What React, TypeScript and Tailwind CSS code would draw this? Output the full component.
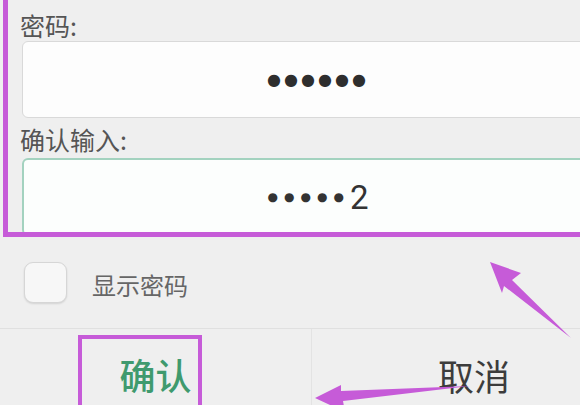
import React from "react";

const cjk = { fontFamily: '"Noto Sans CJK SC", "Noto Sans", sans-serif' };

export default function App() {
  return (
    <div className="relative w-[580px] h-[405px] overflow-hidden bg-[#efefef]" style={cjk}>
      <div className="w-[636px] flex flex-col">
        <div className="px-[22px] pt-[11px] flex flex-col">
          <div className="ml-[-2px] h-[28px] text-[25px] leading-[28px] text-[#555]">密码:</div>
          <div className="mt-[2px] h-[77px] rounded-[6px] bg-[#fdfdfd] border border-[#d9d9d9] flex items-center justify-center">
            <span className="text-[16px] leading-none tracking-[3px] text-[#2e2e2e]" style={{ fontFamily: '"DejaVu Sans", sans-serif' }}>●●●●●●</span>
          </div>
          <div className="ml-[-2px] mt-[7px] h-[28px] text-[25px] leading-[28px] text-[#555]">确认输入:</div>
          <div className="mt-[5px] h-[78px] rounded-[6px] bg-[#fcfefd] border-2 border-[#a3d2bf] flex items-center justify-center">
            <span className="flex items-center text-[#333]">
              <span className="text-[12px] leading-none tracking-[6px]" style={{ fontFamily: '"DejaVu Sans", sans-serif' }}>●●●●●</span>
              <span className="text-[33px] leading-none" style={{ fontFamily: 'Roboto, sans-serif' }}>2</span>
            </span>
          </div>
          <div className="mt-[26px] h-[41px] flex items-center">
            <div className="ml-[2px] w-[43px] h-[41px] rounded-[9px] bg-[#f7f7f7] border border-[#d6d6d6] shadow-[0_1px_2px_rgba(0,0,0,0.12)]" />
            <span className="ml-[25px] mt-[4px] text-[24px] leading-[28px] text-[#666]">显示密码</span>
          </div>
        </div>
        <div className="mt-[25px] border-t border-[#e0e0e0] flex h-[80px]">
          <div className="w-[312px] border-r border-[#e3e3e3] flex justify-center pt-[23px]">
            <span className="text-[36px] leading-[44px] font-medium text-[#3f9a6e]">确认</span>
          </div>
          <div className="flex-1 flex justify-center pt-[24px]">
            <span className="text-[36px] leading-[44px] text-[#3c3c3c]">取消</span>
          </div>
        </div>
      </div>

      {/* highlight rectangle around inputs */}
      <div className="absolute left-[3px] top-[-6px] w-[600px] h-[243px] border-[5px] border-[#c65bd8] pointer-events-none" />
      {/* highlight around confirm */}
      <div className="absolute left-[78px] top-[335px] w-[124px] h-[80px] border-[4px] border-[#c65bd8] pointer-events-none" />

      <svg className="absolute left-0 top-0 pointer-events-none" width="580" height="405" viewBox="0 0 580 405">
        <polygon points="490,262 521,273 512,280 571,338 504,286 502,293" fill="#c65bd8" />
        <polygon points="315,398 341,385 341,391 470,386 343,401 345,412" fill="#c65bd8" />
      </svg>
    </div>
  );
}
